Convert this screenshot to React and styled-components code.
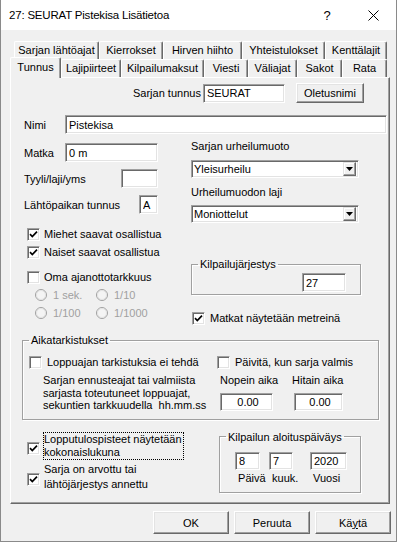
import React from "react";
import styled, { createGlobalStyle } from "styled-components";

const GlobalStyle = createGlobalStyle`
  html, body { margin: 0; padding: 0; background: #fff; }
  body {
    font-family: "Liberation Sans", Arial, sans-serif;
    font-size: 11px;
    color: #000;
  }
  * { box-sizing: border-box; }
`;

const Window = styled.div`
  width: 397px;
  height: 542px;
  border: 1px solid #8a8a8a;
  border-top: none;
  display: flex;
  flex-direction: column;
  background: #f0f0f0;
  overflow: hidden;
`;

const TitleBar = styled.div`
  height: 30px;
  flex: none;
  background: #fff;
  display: flex;
  align-items: center;
  padding-left: 8px;
`;

const TitleText = styled.div`
  flex: 1;
  font-size: 11.5px;
  letter-spacing: -0.2px;
`;

const CaptionButton = styled.div`
  width: 46px;
  height: 30px;
  display: flex;
  align-items: center;
  justify-content: center;
  font-size: 13px;
`;

const Body = styled.div`
  flex: 1;
  display: flex;
  flex-direction: column;
  padding-top: 11px;
`;

const TabRow = styled.div`
  display: flex;
  align-items: flex-end;
  height: 18px;
  padding-left: ${(p) => p.$indent}px;
`;

const Tab = styled.div`
  width: ${(p) => p.$w}px;
  height: ${(p) => (p.$active ? 21 : 18)}px;
  margin-bottom: ${(p) => (p.$active ? -1 : 0)}px;
  position: relative;
  z-index: ${(p) => (p.$active ? 2 : 0)};
  background: #f0f0f0;
  border-top: 1px solid #fff;
  border-left: 1px solid #fff;
  border-right: 1px solid #696969;
  box-shadow: inset -1px 0 #a0a0a0;
  border-radius: 2px 2px 0 0;
  display: flex;
  align-items: center;
  justify-content: center;
  padding-bottom: ${(p) => (p.$active ? 3 : 1)}px;
  white-space: nowrap;
`;

const Panel = styled.div`
  margin-left: 9px;
  width: 380px;
  height: 427px;
  flex: none;
  border-top: 1px solid #fff;
  border-left: 1px solid #fff;
  border-right: 1px solid #696969;
  border-bottom: 1px solid #696969;
  box-shadow: inset -1px -1px #a0a0a0;
  position: relative;
  z-index: 1;
`;

const TunnusRow = styled.div`
  display: flex;
  align-items: center;
  height: 20px;
  margin-top: 5px;
  padding-left: 122px;
  gap: 1px;
`;

const NameRow = styled.div`
  display: flex;
  align-items: center;
  height: 19px;
  margin-top: 12px;
  margin-left: 13px;
`;

const NameLabel = styled.span`
  width: 41px;
`;

const Input = styled.input`
  width: ${(p) => p.$w}px;
  height: ${(p) => p.$h || 19}px;
  margin: 0 0 0 ${(p) => p.$ml || 0}px;
  padding: 0 0 0 3px;
  font: inherit;
  color: #000;
  text-align: ${(p) => p.$align || "left"};
  background: #fff;
  border: 1px solid;
  border-color: #a0a0a0 #fff #fff #a0a0a0;
  box-shadow: inset 1px 1px #696969, inset -1px -1px #e3e3e3;
  outline: none;
  flex: none;
`;

const PushButton = styled.button`
  width: ${(p) => p.$w}px;
  height: ${(p) => p.$h}px;
  margin: 0 0 0 ${(p) => p.$ml || 0}px;
  padding: 0;
  font: inherit;
  color: #000;
  background: #f0f0f0;
  border: 1px solid;
  border-color: #fff #696969 #696969 #fff;
  box-shadow: inset -1px -1px #a0a0a0, inset 1px 1px #e3e3e3;
  flex: none;
`;

const Columns = styled.div`
  display: flex;
  height: 193px;
`;

const LeftCol = styled.div`
  margin-left: 13px;
  width: 134px;
  display: flex;
  flex-direction: column;
`;

const RightCol = styled.div`
  margin-left: 33px;
  width: 169px;
  display: flex;
  flex-direction: column;
`;

const FieldRow = styled.div`
  display: flex;
  justify-content: space-between;
  align-items: center;
  height: 19px;
  margin-top: ${(p) => p.$mt}px;
`;

const CheckRow = styled.div`
  display: flex;
  align-items: center;
  gap: ${(p) => p.$gap || 4}px;
  height: 16px;
  margin-top: ${(p) => p.$mt || 0}px;
  margin-left: ${(p) => p.$ml || 0}px;
  width: ${(p) => (p.$w ? `${p.$w}px` : "auto")};
  white-space: nowrap;
`;

const CheckBoxFrame = styled.span`
  width: 13px;
  height: 13px;
  flex: none;
  background: #fff;
  border: 1px solid;
  border-color: #a0a0a0 #fff #fff #a0a0a0;
  box-shadow: inset 1px 1px #696969, inset -1px -1px #e3e3e3;
  display: flex;
  align-items: center;
  justify-content: center;
  margin-top: ${(p) => p.$mt || 0}px;
`;

const RadioRow = styled.div`
  display: flex;
  height: 16px;
  margin-top: 2px;
  margin-left: 11px;
`;

const RadioItem = styled.div`
  width: 61px;
  display: flex;
  align-items: center;
  gap: 6px;
  color: #a0a0a0;
`;

const Caption = styled.div`
  line-height: 12px;
  margin-top: ${(p) => p.$mt}px;
`;

const SelectBox = styled.div`
  width: 168px;
  height: 18px;
  margin-top: ${(p) => p.$mt}px;
  background: #fff;
  border: 1px solid;
  border-color: #a0a0a0 #fff #fff #a0a0a0;
  box-shadow: inset 1px 1px #696969, inset -1px -1px #e3e3e3;
  display: flex;
  align-items: center;
  padding: 0 2px 0 2px;
`;

const SelectText = styled.span`
  flex: 1;
`;

const DropButton = styled.span`
  width: 13px;
  height: 14px;
  background: #f0f0f0;
  border: 1px solid;
  border-color: #e3e3e3 #696969 #696969 #e3e3e3;
  box-shadow: inset -1px -1px #a0a0a0, inset 1px 1px #fff;
  display: flex;
  align-items: center;
  justify-content: center;
`;

const GroupBox = styled.fieldset`
  margin: ${(p) => p.$mt || 0}px 0 0 ${(p) => p.$ml || 0}px;
  padding: 0 0 ${(p) => p.$pb || 0}px 0;
  width: ${(p) => p.$w}px;
  min-width: 0;
  border: 1px solid #a0a0a0;
  box-shadow: inset 1px 1px #fff, 1px 1px #fff;
  flex: none;
`;

const GroupTitle = styled.legend`
  padding: 0 2px;
  margin-left: 6px;
  line-height: 12px;
`;

const OrderInputRow = styled.div`
  display: flex;
  justify-content: flex-end;
  padding-right: 14px;
  margin-top: 3px;
`;

const TimeChecks = styled.div`
  display: flex;
  margin-top: 8px;
  padding-left: 6px;
`;

const TimeRow = styled.div`
  display: flex;
  margin-top: 4px;
  padding-left: 20px;
`;

const Note = styled.div`
  width: 177px;
  line-height: 12.5px;
  white-space: pre;
`;

const TimeCol = styled.div`
  width: 72px;
  display: flex;
  flex-direction: column;
  line-height: 12px;
`;

const TimeInputWrap = styled.div`
  margin-top: 7px;
`;

const BottomRow = styled.div`
  display: flex;
  margin-top: 11px;
`;

const BottomChecks = styled.div`
  width: 192px;
  margin-left: 16px;
  padding-top: 1px;
  display: flex;
  flex-direction: column;
`;

const MultiCheck = styled.div`
  display: flex;
  align-items: flex-start;
  gap: 3px;
  margin-top: ${(p) => p.$mt || 0}px;
`;

const MultiLabel = styled.span`
  border: 1px ${(p) => (p.$focus ? "dotted #000" : "solid transparent")};
  line-height: ${(p) => p.$lh}px;
  padding: 0 1px 0 0;
  white-space: nowrap;
`;

const DateGrid = styled.div`
  display: grid;
  grid-template-columns: 34px 41px 1fr;
  margin-top: 9px;
  padding-left: 15px;
  row-gap: 2px;
  line-height: 12px;
`;

const ButtonRow = styled.div`
  display: flex;
  justify-content: flex-end;
  gap: 5px;
  margin-top: 7px;
  padding-right: 5px;
`;

function CheckMark() {
  return (
    <svg width="9" height="9" viewBox="0 0 9 9">
      <path d="M1 4.2 L3.3 6.5 L8 1.6" fill="none" stroke="#000" strokeWidth="1.7" />
    </svg>
  );
}

function CheckBox({ checked, mt }) {
  return <CheckBoxFrame $mt={mt}>{checked && <CheckMark />}</CheckBoxFrame>;
}

function Radio() {
  return (
    <svg width="12" height="12" viewBox="0 0 12 12" style={{ flex: "none" }}>
      <circle cx="6" cy="6" r="5.5" fill="#f4f4f4" stroke="#a0a0a0" />
      <circle cx="6" cy="6" r="4.5" fill="none" stroke="#e3e3e3" />
    </svg>
  );
}

function Select({ value, mt }) {
  return (
    <SelectBox $mt={mt}>
      <SelectText>{value}</SelectText>
      <DropButton>
        <svg width="7" height="4" viewBox="0 0 7 4">
          <path d="M0 0 H7 L3.5 4 Z" fill="#000" />
        </svg>
      </DropButton>
    </SelectBox>
  );
}

const backTabs = [
  ["Sarjan lähtöajat", 85],
  ["Kierrokset", 64],
  ["Hirven hiihto", 79],
  ["Yhteistulokset", 83],
  ["Kenttälajit", 62],
];

const frontTabs = [
  ["Tunnus", 51],
  ["Lajipiirteet", 60],
  ["Kilpailumaksut", 83],
  ["Viesti", 44],
  ["Väliajat", 49],
  ["Sakot", 45],
  ["Rata", 45],
];

export default function App() {
  return (
    <>
      <GlobalStyle />
      <Window>
        <TitleBar>
          <TitleText>27: SEURAT Pistekisa Lisätietoa</TitleText>
          <CaptionButton>?</CaptionButton>
          <CaptionButton>
            <svg width="11" height="11" viewBox="0 0 11 11">
              <path d="M0.5 0.5 L10.5 10.5 M10.5 0.5 L0.5 10.5" stroke="#000" strokeWidth="1" />
            </svg>
          </CaptionButton>
        </TitleBar>
        <Body>
          <TabRow $indent={13}>
            {backTabs.map(([t, w]) => (
              <Tab key={t} $w={w}>{t}</Tab>
            ))}
          </TabRow>
          <TabRow $indent={9}>
            {frontTabs.map(([t, w], i) => (
              <Tab key={t} $w={w} $active={i === 0}>{t}</Tab>
            ))}
          </TabRow>
          <Panel>
            <TunnusRow>
              <span>Sarjan tunnus</span>
              <Input $w={82} $ml={1} defaultValue="SEURAT" readOnly />
              <PushButton $w={68} $h={20} $ml={10}>Oletusnimi</PushButton>
            </TunnusRow>
            <NameRow>
              <NameLabel>Nimi</NameLabel>
              <Input $w={322} defaultValue="Pistekisa" readOnly />
            </NameRow>
            <Columns>
              <LeftCol>
                <FieldRow $mt={9}>
                  <span>Matka</span>
                  <Input $w={93} defaultValue="0 m" readOnly />
                </FieldRow>
                <FieldRow $mt={7}>
                  <span>Tyyli/laji/yms</span>
                  <Input $w={37} defaultValue="" readOnly />
                </FieldRow>
                <FieldRow $mt={7}>
                  <span>Lähtöpaikan tunnus</span>
                  <Input $w={19} defaultValue="A" readOnly />
                </FieldRow>
                <CheckRow $mt={12} $ml={3}>
                  <CheckBox checked />
                  <span>Miehet saavat osallistua</span>
                </CheckRow>
                <CheckRow $mt={2} $ml={3}>
                  <CheckBox checked />
                  <span>Naiset saavat osallistua</span>
                </CheckRow>
                <CheckRow $mt={9} $ml={3}>
                  <CheckBox />
                  <span>Oma ajanottotarkkuus</span>
                </CheckRow>
                <RadioRow>
                  <RadioItem><Radio /><span>1 sek.</span></RadioItem>
                  <RadioItem><Radio /><span>1/10</span></RadioItem>
                </RadioRow>
                <RadioRow>
                  <RadioItem><Radio /><span>1/100</span></RadioItem>
                  <RadioItem><Radio /><span>1/1000</span></RadioItem>
                </RadioRow>
              </LeftCol>
              <RightCol>
                <Caption $mt={6}>Sarjan urheilumuoto</Caption>
                <Select value="Yleisurheilu" mt={8} />
                <Caption $mt={8}>Urheilumuodon laji</Caption>
                <Select value="Moniottelut" mt={7} />
                <GroupBox $w={170} $mt={35} $pb={2}>
                  <GroupTitle>Kilpailujärjestys</GroupTitle>
                  <OrderInputRow>
                    <Input $w={44} defaultValue="27" readOnly />
                  </OrderInputRow>
                </GroupBox>
                <CheckRow $mt={15} $ml={1} $gap={5}>
                  <CheckBox checked />
                  <span>Matkat näytetään metreinä</span>
                </CheckRow>
              </RightCol>
            </Columns>
            <GroupBox $w={357} $mt={7} $ml={11} $pb={7}>
              <GroupTitle>Aikatarkistukset</GroupTitle>
              <TimeChecks>
                <CheckRow $w={188} $gap={5}>
                  <CheckBox />
                  <span>Loppuajan tarkistuksia ei tehdä</span>
                </CheckRow>
                <CheckRow $gap={5}>
                  <CheckBox />
                  <span>Päivitä, kun sarja valmis</span>
                </CheckRow>
              </TimeChecks>
              <TimeRow>
                <Note>
                  {"Sarjan ennusteajat tai valmiista\nsarjasta toteutuneet loppuajat,\nsekuntien tarkkuudella  hh.mm.ss"}
                </Note>
                <TimeCol>
                  <span>Nopein aika</span>
                  <TimeInputWrap>
                    <Input $w={53} $h={18} $align="center" defaultValue="0.00" readOnly />
                  </TimeInputWrap>
                </TimeCol>
                <TimeCol>
                  <span>Hitain aika</span>
                  <TimeInputWrap>
                    <Input $w={49} $h={18} $ml={2} $align="center" defaultValue="0.00" readOnly />
                  </TimeInputWrap>
                </TimeCol>
              </TimeRow>
            </GroupBox>
            <BottomRow>
              <BottomChecks>
                <MultiCheck>
                  <CheckBox checked mt={10} />
                  <MultiLabel $focus $lh={13}>
                    Lopputulospisteet näytetään
                    <br />
                    kokonaislukuna
                  </MultiLabel>
                </MultiCheck>
                <MultiCheck $mt={1}>
                  <CheckBox checked mt={12} />
                  <MultiLabel $lh={15}>
                    Sarja on arvottu tai
                    <br />
                    lähtöjärjestys annettu
                  </MultiLabel>
                </MultiCheck>
              </BottomChecks>
              <GroupBox $w={142} $pb={3}>
                <GroupTitle>Kilpailun aloituspäiväys</GroupTitle>
                <DateGrid>
                  <Input $w={25} $h={18} defaultValue="8" readOnly />
                  <Input $w={24} $h={18} defaultValue="7" readOnly />
                  <Input $w={37} $h={18} defaultValue="2020" readOnly />
                  <span>&nbsp;Päivä</span>
                  <span>&nbsp;kuuk.</span>
                  <span>&nbsp;Vuosi</span>
                </DateGrid>
              </GroupBox>
            </BottomRow>
          </Panel>
          <ButtonRow>
            <PushButton $w={76} $h={23}>OK</PushButton>
            <PushButton $w={76} $h={23}>Peruuta</PushButton>
            <PushButton $w={76} $h={23}>
              Kä<u>y</u>tä
            </PushButton>
          </ButtonRow>
        </Body>
      </Window>
    </>
  );
}
